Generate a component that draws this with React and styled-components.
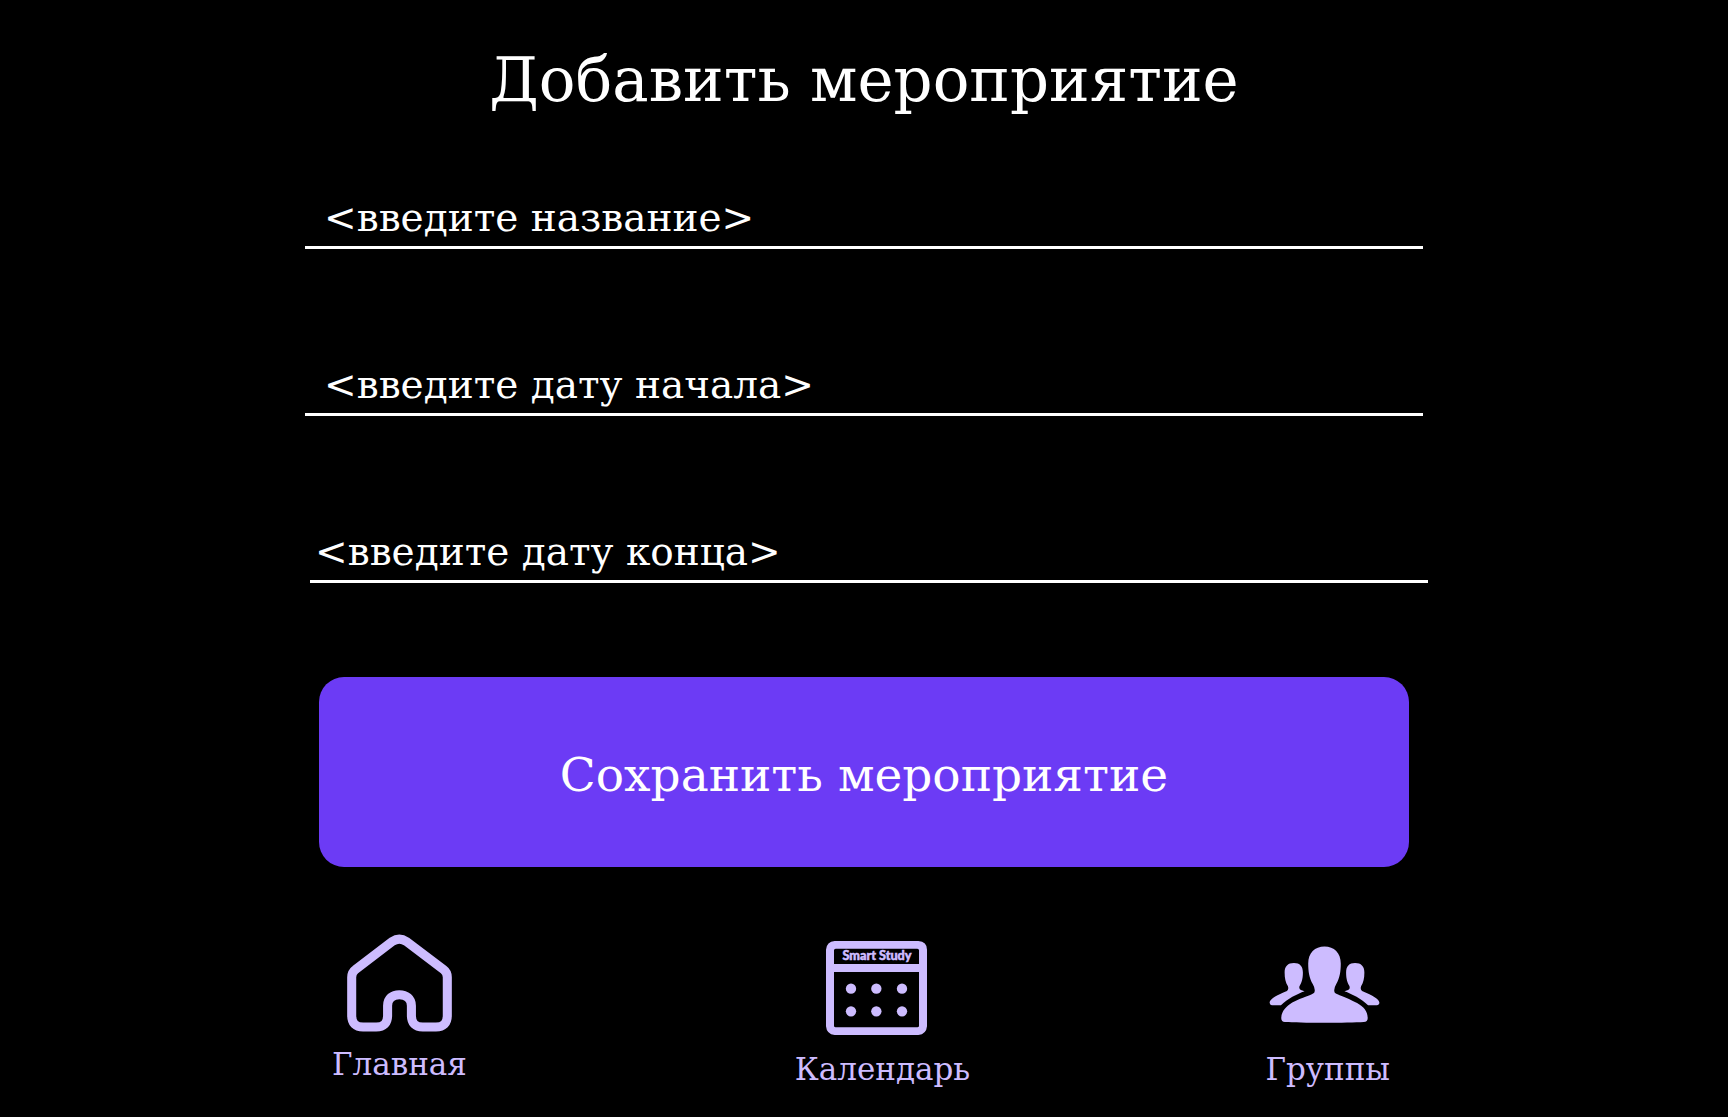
import React from 'react';
import styled, { createGlobalStyle } from 'styled-components';

const GlobalStyle = createGlobalStyle`
  * { box-sizing: border-box; }
  body {
    margin: 0;
    background: #000;
    color: #fff;
    font-family: "DejaVu Serif", "Liberation Serif", serif;
  }
`;

const Page = styled.main`
  display: flex;
  flex-direction: column;
  align-items: center;
  min-height: 100vh;
  padding: 40px 24px 16px;
`;

const Title = styled.h1`
  margin: 0;
  font-size: 61px;
  font-weight: 400;
  line-height: 80px;
  text-align: center;
`;

const Form = styled.form`
  display: flex;
  flex-direction: column;
  width: 100%;
  max-width: 1118px;
  margin-top: 69px;
`;

const Fields = styled.div`
  display: grid;
  gap: 107px;
`;

const Input = styled.input`
  width: 100%;
  height: 60px;
  padding: 0 0 0 ${(p) => (p.$tight ? 5 : 19)}px;
  border: 0;
  border-bottom: 3px solid #fff;
  border-radius: 0;
  outline: none;
  background: transparent;
  color: #fff;
  font: 400 39px/48px "DejaVu Serif", "Liberation Serif", serif;
  position: relative;
  left: ${(p) => (p.$tight ? 5 : 0)}px;

  &::placeholder {
    color: #fff;
    opacity: 1;
  }
`;

const SaveButton = styled.button`
  height: 190px;
  margin: 94px 14px 0;
  padding: 6px 16px 0;
  border: 0;
  border-radius: 25px;
  background: #6c3bf5;
  color: #fff;
  font: 400 47px/64px "DejaVu Serif", "Liberation Serif", serif;
  cursor: pointer;
`;

const Nav = styled.nav`
  display: grid;
  grid-template-columns: auto 10fr auto 9fr auto;
  width: 100%;
  max-width: 1064px;
  margin-top: 67px;
  padding-right: 6px;
`;

const NavLink = styled.a`
  display: flex;
  flex-direction: column;
  align-items: center;
  grid-column: ${(p) => p.$column};
  padding-top: ${(p) => (p.$low ? 5 : 0)}px;
  color: #cdbcff;
  font-size: 31px;
  line-height: 40px;
  text-decoration: none;
`;

const IconBox = styled.span`
  display: flex;
  align-items: center;
  justify-content: center;
  height: 98px;
  margin-right: ${(p) => p.$shift || 0}px;
  margin-bottom: 12px;
`;

const HomeIcon = () => (
  <svg width="105" height="98" viewBox="76 41 313 292" fill="none" stroke="currentColor" strokeWidth="27" aria-hidden="true">
    <path d="M90 170Q90 155 101 147L211 63Q232 49 253 63L364 147Q375 155 375 170V284Q375 318 341 318H302Q268 318 268 284V255C268 233 252 222 232 222C212 222 197 233 197 255V284Q197 318 163 318H124Q90 318 90 284Z" />
  </svg>
);

const CalendarIcon = () => (
  <svg width="101" height="94" viewBox="138 60 303 282" fill="currentColor" aria-hidden="true">
    <path
      fillRule="evenodd"
      d="M164 60H415Q441 62 441 86V316Q439 340 415 342H164Q140 340 138 316V86Q140 62 164 60ZM167 83Q162 83 162 88V129H417V88Q417 83 412 83ZM162 153V314Q162 319 167 319H412Q417 319 417 314V153Z"
    />
    {[203, 271].map((y) => [213, 289, 366].map((x) => <circle key={`${x}-${y}`} cx={x} cy={y} r="15.5" />))}
    <text
      x="291"
      y="116"
      textAnchor="middle"
      fontFamily="Lato, sans-serif"
      fontWeight="900"
      fontSize="38"
      stroke="currentColor"
      strokeWidth="1.5"
    >
      Smart Study
    </text>
  </svg>
);

const SIDE_PERSON =
  'M135 124C153 124 162 134 162 152C162 172 158 182 152 193Q149 202 156 205L167 209C145 217 115 232 96 251L70 251Q61 250 62 242C64 232 80 222 114 208Q120 204 117 194C110 182 107 170 107 152C107 134 117 124 135 124Z';

const GroupsIcon = () => (
  <svg width="111" height="85" viewBox="60 73 334 255" fill="currentColor" aria-hidden="true">
    <path d="M227 74C256 74 276 93 276 125C276 150 273 168 262 188Q253 204 258 213C264 219 290 225 325 244C345 256 357 268 357 290Q357 301 345 301C300 304 150 304 108 301Q96 300 97 288C98 268 112 255 130 243C160 226 190 220 196 213Q201 204 192 188C181 168 178 150 178 125C178 93 198 74 227 74Z" />
    <path d={SIDE_PERSON} />
    <path d={SIDE_PERSON} transform="translate(454 0) scale(-1 1)" />
  </svg>
);

const FIELDS = [
  { name: 'title', label: 'введите название' },
  { name: 'start', label: 'введите дату начала' },
  { name: 'end', label: 'введите дату конца', tight: true },
];

export default function App() {
  return (
    <>
      <GlobalStyle />
      <Page>
        <Title>Добавить мероприятие</Title>
        <Form onSubmit={(e) => e.preventDefault()}>
          <Fields>
            {FIELDS.map((f) => (
              <Input key={f.name} name={f.name} type="text" aria-label={f.label} placeholder={`<${f.label}>`} $tight={f.tight} />
            ))}
          </Fields>
          <SaveButton type="submit">Сохранить мероприятие</SaveButton>
        </Form>
        <Nav>
          <NavLink href="#home" $column={1}>
            <IconBox><HomeIcon /></IconBox>
            Главная
          </NavLink>
          <NavLink href="#calendar" $column={3} $low>
            <IconBox $shift={12}><CalendarIcon /></IconBox>
            Календарь
          </NavLink>
          <NavLink href="#groups" $column={5} $low>
            <IconBox $shift={6}><GroupsIcon /></IconBox>
            Группы
          </NavLink>
        </Nav>
      </Page>
    </>
  );
}
